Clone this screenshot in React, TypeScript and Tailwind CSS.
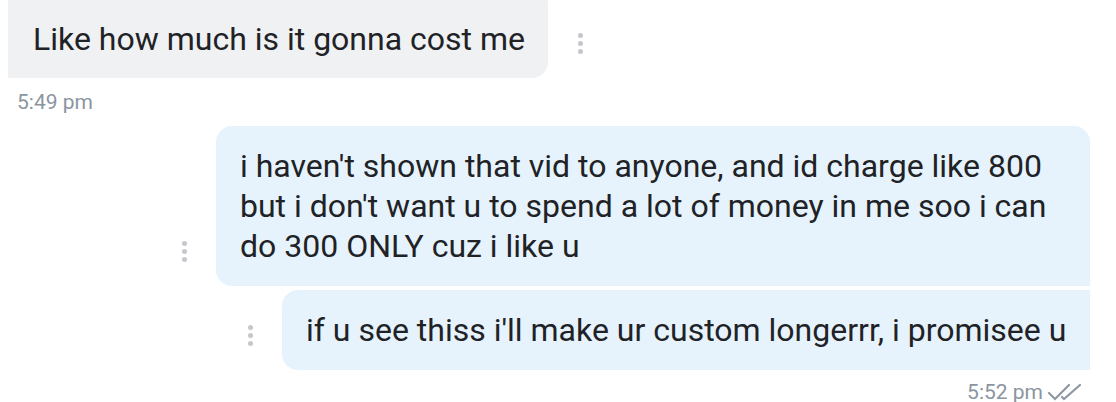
import React from "react";

const Dots = () => (
    <div className="flex w-5 flex-col items-center gap-[3px] mb-[24px]">
        <span className="h-[5px] w-[5px] rounded-full bg-[#c4c8cd]" />
        <span className="h-[5px] w-[5px] rounded-full bg-[#c4c8cd]" />
        <span className="h-[5px] w-[5px] rounded-full bg-[#c4c8cd]" />
    </div>
);

const DoubleCheck = () => (
    <svg width="38" height="18" viewBox="0 0 38 18" fill="none" stroke="#8e98a3" strokeWidth="2.2" strokeLinecap="round">
        <path d="M2 10l6 6L22 2" />
        <path d="M15 14l2 2L33 2" />
    </svg>
);

export default function App() {
    return (
        <div
            className="w-[1116px] h-[402px] overflow-hidden bg-white text-[#212226]"
            style={{ fontFamily: "Roboto, 'Liberation Sans', sans-serif" }}
        >
            {/* incoming */}
            <div className="flex items-end gap-[22px] pl-2 -mt-3">
                <div className="flex h-[90px] w-[540px] items-center bg-[#f0f1f3] pl-[25px] pt-3 rounded-r-2xl text-[32px] leading-[40px]">
                    Like how much is it gonna cost me
                </div>
                <Dots />
            </div>
            <div className="mt-[12px] pl-[17px] text-[21px] leading-6 text-[#8b95a1]">5:49 pm</div>

            {/* outgoing */}
            <div className="mt-[12px] flex flex-col items-end gap-1 pr-[26px]">
                <div className="flex items-end gap-[22px]">
                    <Dots />
                    <div className="w-[874px] rounded-l-2xl rounded-tr-2xl bg-[#e6f3fc] px-6 py-5 text-[32px] leading-[40px]">
                        i haven't shown that vid to anyone, and id charge like 800 but i don't want u to spend a lot of money in me soo i can do 300 ONLY cuz i like u
                    </div>
                </div>
                <div className="flex items-end gap-[22px]">
                    <Dots />
                    <div className="w-[808px] whitespace-nowrap rounded-l-2xl bg-[#e6f3fc] py-5 pl-6 pr-2 text-[32px] leading-[40px]">
                        if u see thiss i'll make ur custom longerrr, i promisee u
                    </div>
                </div>
            </div>
            <div className="mt-[10px] flex items-center justify-end gap-1 pr-[31px] text-[21px] leading-6 text-[#8b95a1]">
                <span>5:52 pm</span>
                <DoubleCheck />
            </div>
        </div>
    );
}
